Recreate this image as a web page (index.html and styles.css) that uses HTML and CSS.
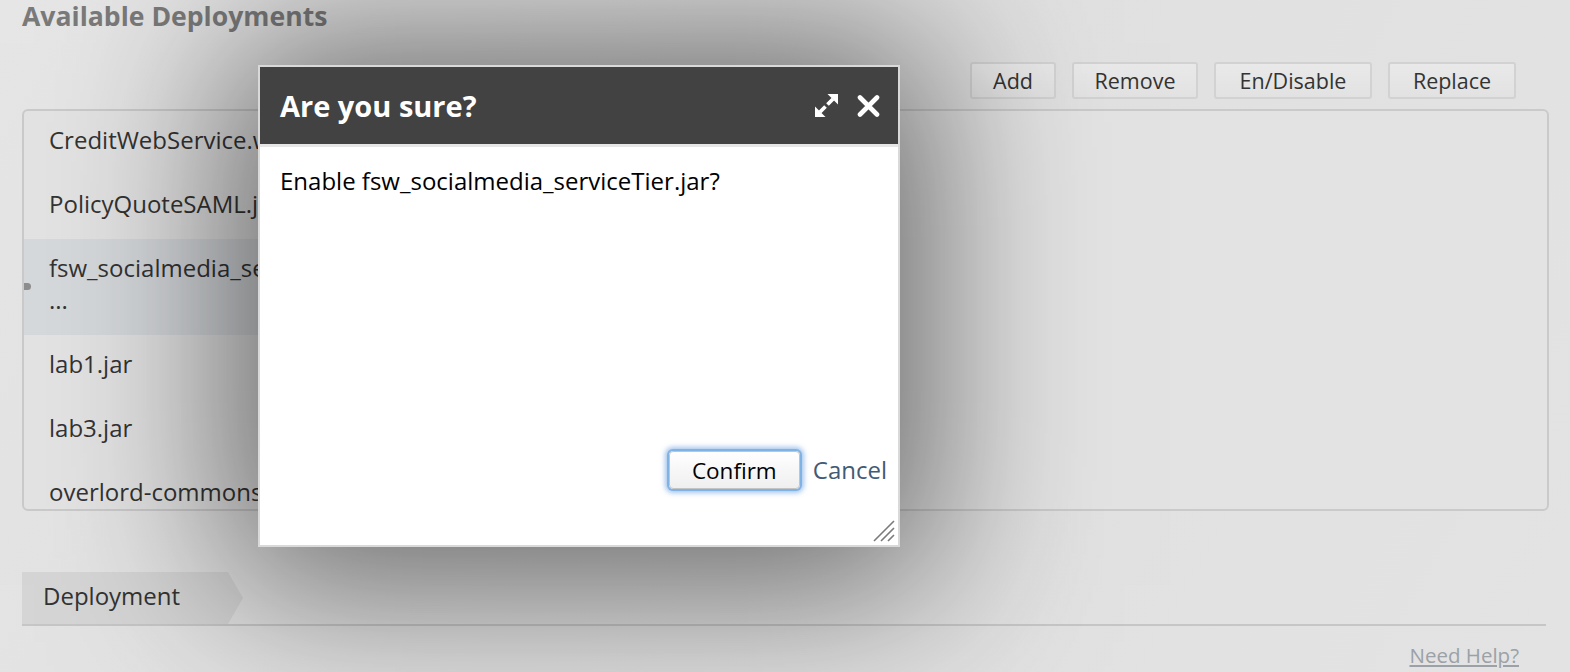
FILE: index.html
```html
<!DOCTYPE html>
<html lang="en">
<head>
<meta charset="utf-8">
<title>Available Deployments</title>
<link rel="stylesheet" href="styles.css">
</head>
<body>
<div class="page">
  <h1 class="title">Available Deployments</h1>
  <div class="toolbar">
    <button class="btn btn-add">Add</button>
    <button class="btn btn-remove">Remove</button>
    <button class="btn btn-toggle">En/Disable</button>
    <button class="btn btn-replace">Replace</button>
  </div>
  <div class="panel">
    <ul class="list">
      <li class="item">CreditWebService.war</li>
      <li class="item">PolicyQuoteSAML.jar</li>
      <li class="item selected"><span class="marker"></span>fsw_socialmedia_serviceTier.jar<br>...</li>
      <li class="item">lab1.jar</li>
      <li class="item">lab3.jar</li>
      <li class="item">overlord-commons-auth.jar</li>
    </ul>
  </div>
  <div class="tabs">
    <div class="tab">Deployment</div>
  </div>
  <div class="help-row">
    <a class="help" href="#">Need Help?</a>
  </div>
</div>

<div class="backdrop">
  <div class="dialog">
    <div class="dialog-header">
      <span class="dialog-title">Are you sure?</span>
      <div class="dialog-tools">
        <svg class="icon" width="23" height="23" viewBox="0 0 23 23">
          <polygon points="12.5,0 23,0 23,10.5" fill="#fff"/>
          <line x1="18" y1="5" x2="12.5" y2="10.5" stroke="#fff" stroke-width="3.8"/>
          <polygon points="0,12.5 0,23 10.5,23" fill="#fff"/>
          <line x1="5" y1="18" x2="10.5" y2="12.5" stroke="#fff" stroke-width="3.8"/>
        </svg>
        <svg class="icon" width="23" height="22" viewBox="0 0 23 22">
          <path d="M3 2.5 L20 19.5 M20 2.5 L3 19.5" stroke="#fff" stroke-width="4.6" stroke-linecap="round"/>
        </svg>
      </div>
    </div>
    <div class="dialog-body">
      <p class="message">Enable fsw_socialmedia_serviceTier.jar?</p>
    </div>
    <div class="dialog-footer">
      <button class="confirm">Confirm</button>
      <a class="cancel" href="#">Cancel</a>
    </div>
    <svg class="grip" width="24" height="22" viewBox="0 0 24 22">
      <path d="M2 21 L22 1 M9 21 L22 8 M16 21 L22 15" stroke="#7a7a7a" stroke-width="1.6"/>
    </svg>
  </div>
</div>
</body>
</html>
```
FILE: styles.css
```css
html, body {
  margin: 0;
  padding: 0;
}
body {
  width: 1570px;
  height: 672px;
  overflow: hidden;
  background: linear-gradient(120deg, #e6e6e6 0%, #e0e0e0 45%, #e3e3e3 100%);
  font-family: "Open Sans", "DejaVu Sans", sans-serif;
  color: #333;
  position: relative;
}
.page {
  padding: 0 21px 0 22px;
}
.title {
  margin: 0;
  font-size: 26.6px;
  line-height: 32px;
  font-weight: 700;
  color: #7a7a7a;
}
.toolbar {
  display: flex;
  justify-content: flex-end;
  gap: 16px;
  margin-top: 30px;
  padding-right: 33px;
}
.btn {
  height: 37px;
  padding: 0;
  border: 2px solid #d2d2d2;
  border-radius: 3px;
  background: linear-gradient(#e9e9e9, #e2e2e2);
  font-family: "Open Sans", "DejaVu Sans", sans-serif;
  font-size: 21.5px;
  color: #333;
  line-height: 31px;
}
.btn-add { width: 86px; }
.btn-remove { width: 126px; }
.btn-toggle { width: 158px; }
.btn-replace { width: 128px; }
.panel {
  margin-top: 10px;
  height: 398px;
  border: 2px solid #cacaca;
  border-radius: 6px;
  overflow: hidden;
  background: #e3e3e3;
}
.list {
  list-style: none;
  margin: 0;
  padding: 0;
  width: 380px;
}
.item {
  position: relative;
  padding: 13px 0 19px 25px;
  font-size: 24px;
  line-height: 32px;
  color: #333;
  white-space: nowrap;
}
.item.selected {
  background: #d6d9dc;
}
.marker {
  position: absolute;
  left: 0;
  top: 44px;
  width: 7px;
  height: 7px;
  border-radius: 0 4px 4px 0;
  background: #8e8e8e;
}
.tabs {
  margin-top: 61px;
  margin-right: 3px;
  border-bottom: 2px solid #c6c6c6;
  display: flex;
}
.tab {
  position: relative;
  height: 52px;
  box-sizing: border-box;
  width: 206px;
  padding: 0 0 5px 21px;
  background: #d5d5d5;
  font-size: 24px;
  line-height: 47px;
  color: #333;
}
.tab::after {
  content: "";
  position: absolute;
  left: 100%;
  top: 0;
  border-left: 15px solid #d5d5d5;
  border-top: 26px solid transparent;
  border-bottom: 26px solid transparent;
}
.help-row {
  display: flex;
  justify-content: flex-end;
  margin-top: 15px;
  padding-right: 30px;
}
.help {
  font-size: 20.5px;
  line-height: 28px;
  color: #9ba1a7;
  text-decoration: underline;
}
.backdrop {
  position: absolute;
  inset: 0;
}
.dialog {
  position: absolute;
  left: 258px;
  top: 65px;
  width: 638px;
  height: 478px;
  border: 2px solid #d9d9d9;
  background: #fff;
  display: flex;
  flex-direction: column;
  box-shadow: 0 8px 160px 30px rgba(0, 0, 0, 0.55);
}
.dialog-header {
  height: 77px;
  flex: none;
  display: flex;
  align-items: center;
  justify-content: space-between;
  padding: 0 18px 0 20px;
  background: #424242;
  border-bottom: 3px solid #e6e6e6;
}
.dialog-title {
  font-size: 29px;
  font-weight: 700;
  color: #fff;
}
.dialog-tools {
  display: flex;
  align-items: center;
  gap: 19px;
}
.icon {
  display: block;
}
.dialog-body {
  flex: 1;
  padding: 18px 20px 0;
}
.message {
  margin: 0;
  font-size: 24px;
  line-height: 32px;
  color: #000;
}
.dialog-footer {
  display: flex;
  justify-content: flex-end;
  align-items: center;
  gap: 13px;
  padding: 0 11px 0 0;
  margin-bottom: 56px;
}
.confirm {
  width: 131px;
  height: 38px;
  border: 1px solid #c4c4c4;
  border-radius: 4px;
  background: linear-gradient(#ffffff, #efefef);
  box-shadow: 0 0 0 2px #7fb2e5, 0 0 5px 4px rgba(90, 150, 220, 0.55);
  font-family: "Open Sans", "DejaVu Sans", sans-serif;
  font-size: 22.5px;
  color: #000;
  padding: 0;
}
.cancel {
  font-size: 24px;
  line-height: 32px;
  color: #3f5b77;
  text-decoration: none;
}
.grip {
  position: absolute;
  right: 2px;
  bottom: 3px;
}
```
